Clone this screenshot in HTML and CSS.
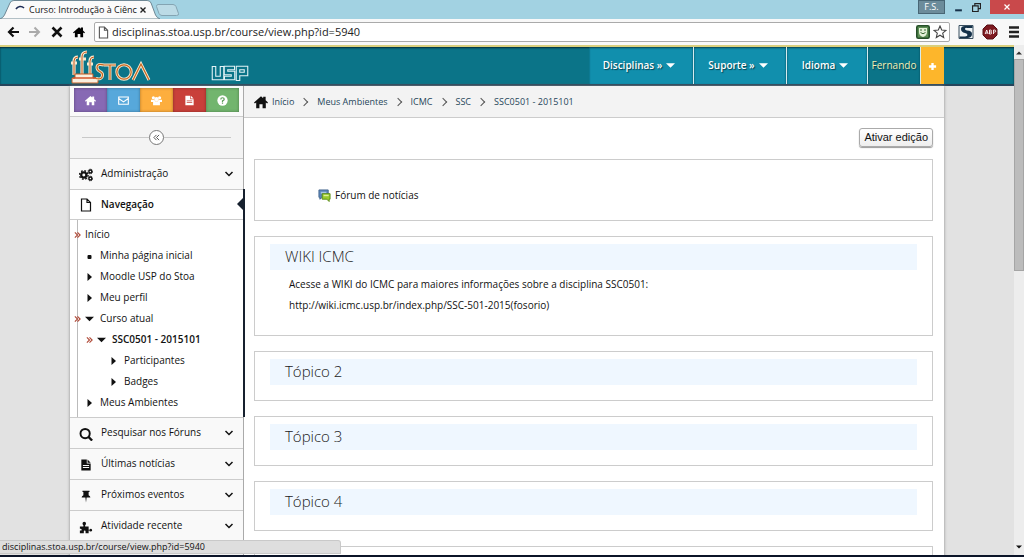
FILE: index.html
```html
<!DOCTYPE html>
<html lang="pt-BR">
<head>
<meta charset="utf-8">
<title>Curso: Introdução à Ciência</title>
<link rel="stylesheet" href="styles.css">
</head>
<body>
<svg class="sprite" aria-hidden="true">
  <symbol id="home" viewBox="0 0 16 16"><path d="M0 8.5 8 1.5l2.5 2.2V2h2.8v4.1L16 8.500l-1 1.200-1.500-1.200V15H9.800v-4.500H6.200V15H2.500V8.500L1 9.700z"/></symbol>
  <symbol id="mail" viewBox="0 0 16 16"><path d="M1 3h14v10.500H1zM1 5l7 5 7-5" fill="none" stroke="currentColor" stroke-width="1.600"/></symbol>
  <symbol id="users" viewBox="0 0 16 16"><circle cx="3.500" cy="4" r="2.300"/><circle cx="12.500" cy="4" r="2.300"/><circle cx="8" cy="6" r="3"/><path d="M0 7h5l1 2h4l1-2h5v3h-3v5H3v-5H0z"/></symbol>
  <symbol id="doc" viewBox="0 0 16 16"><path fill-rule="evenodd" d="M2 1h7v5h5v9H2zM10 1l4 4h-4zM4 8v1.200h8V8zm0 2.500v1.200h8v-1.200z"/></symbol>
  <symbol id="chev" viewBox="0 0 10 10"><path d="m1.500 3 3.500 3.500L8.500 3" fill="none" stroke="currentColor" stroke-width="1.500"/></symbol>
  <symbol id="guil" viewBox="0 0 8 8"><path d="m1 1 3 3-3 3M4 1l3 3-3 3" fill="none" stroke="currentColor" stroke-width="1.300"/></symbol>
  <symbol id="right" viewBox="0 0 6 8"><path d="m1 0 4.500 4L1 8z"/></symbol>
  <symbol id="down" viewBox="0 0 8 6"><path d="M0 1h8L4 5z"/></symbol>
  <symbol id="page" viewBox="0 0 12 14"><path d="M1.500 1h5.500l3.500 3.500V13h-9zM7 1v3.500h3.500" fill="none" stroke="currentColor" stroke-width="1.200"/></symbol>
</svg>
<div class="window">
  <header class="titlebar">
    <div class="tab">
      <svg class="tab-shape" viewBox="0 0 163 19" preserveAspectRatio="none"><path d="M0 19q3-1 4.500-4L10 3q1-2.500 4-2.500h134q3 0 4 2.500l4.500 12q1.500 3 4.500 4z" fill="#fafafa" stroke="#6d8794"/></svg>
      <svg class="spinner" viewBox="0 0 12 12"><path d="M1 5a5 5 0 0 1 8-1" fill="none" stroke="#1d2b55" stroke-width="1.600"/></svg>
      <span class="tab-title">Curso: Introdução à Ciênc</span>
      <button class="plain tab-close" aria-label="Fechar aba"><svg viewBox="0 0 8 8"><path d="m1.500 1.500 5 5m0-5-5 5" stroke="#222" stroke-width="1.400"/></svg></button>
    </div>
    <button class="plain newtab" aria-label="Nova aba"><svg viewBox="0 0 24 12"><path d="M2 .5h15q2 0 3 2l2.500 7q.5 2-2 2H6q-2 0-3-2L.5 2.500Q.5.5 2 .5z" fill="#bcdbe6" stroke="#84a4b2"/></svg></button>
    <div class="win-controls">
      <button class="user">F.S.</button>
      <button class="plain win" aria-label="Minimizar"><svg viewBox="0 0 8 8"><path d="M1 6.500h6" stroke="#17324a" stroke-width="1.800"/></svg></button>
      <button class="plain win" aria-label="Restaurar"><svg viewBox="0 0 8 8"><path d="M2.500 2.500v-2h5v4.500h-2M.5 2.500h5v5h-5z" fill="none" stroke="#222"/></svg></button>
      <button class="close" aria-label="Fechar"><svg viewBox="0 0 8 8"><path d="m1.500 1.500 5 5m0-5-5 5" stroke="#fff" stroke-width="1.200"/></svg></button>
    </div>
  </header>
  <div class="toolbar">
    <button class="plain tool" aria-label="Voltar"><svg viewBox="0 0 14 14"><path d="M13 7H3m4.500-4.500L3 7l4.500 4.500" fill="none" stroke="#111" stroke-width="2.200"/></svg></button>
    <button class="plain tool" aria-label="Avançar"><svg viewBox="0 0 14 14"><path d="M1 7h10M6.500 2.500 11 7l-4.500 4.500" fill="none" stroke="#aaa" stroke-width="2"/></svg></button>
    <button class="plain tool" aria-label="Parar"><svg viewBox="0 0 14 14"><path d="m2.500 2.500 9 9m0-9-9 9" stroke="#111" stroke-width="2.600"/></svg></button>
    <button class="plain tool home" aria-label="Página inicial"><svg viewBox="0 0 16 16"><use href="#home"/></svg></button>
    <label class="address">
      <svg class="pageicon" viewBox="0 0 12 14"><use href="#page"/></svg>
      <input type="text" aria-label="Endereço" value="disciplinas.stoa.usp.br/course/view.php?id=5940">
      <svg class="ext" viewBox="0 0 14 14"><rect x=".8" y=".8" width="12.400" height="12.400" rx="1.500" fill="#5c8f55" stroke="#254f28" stroke-width="1.600"/><path d="M3 3h8v4q0 4-4 5-4-1-4-5z" fill="#e4f1d8"/><path d="M5 4v2m4-2v2M4.500 7.500q2.500 2.500 5 0" stroke="#3c6a37" fill="none"/></svg>
      <svg class="ext" viewBox="0 0 14 14"><path d="m7 1 1.700 4 4.300.4-3.300 2.800 1 4.300L7 10.200l-3.700 2.300 1-4.300L1 5.400 5.300 5z" fill="#fff" stroke="#444" stroke-width="1.100"/></svg>
    </label>
    <button class="plain extbtn" aria-label="Extensão S"><svg viewBox="0 0 16 16"><path d="M1 1.500h14v13H1z" fill="#eef3f5" stroke="#3a5060"/><path d="M14.500 2H7Q3 2 3 5t4 4q2.500.7 2.500 2T7 12.500H1.500v1.500H10q4-.5 4-4T9 6.500Q6.500 6 7 4.700T9 4h5.500z" fill="#15324a"/></svg></button>
    <button class="plain extbtn" aria-label="Adblock Plus"><svg viewBox="0 0 16 16"><path d="M5 1h6l4 4v6l-4 4H5l-4-4V5z" fill="#7e1a20" stroke="#571015"/><path d="m3.200 10 1.500-4 1.500 4M4 9h1.500M7.500 6v4h1q1.200-.2 1.200-1T8.500 8q1-.2 1-1t-1-1zM11.500 10V6h1q1.200.2 1.200 1.200t-1.500 1" fill="none" stroke="#fff" stroke-width=".9"/></svg></button>
    <button class="plain extbtn" aria-label="Menu"><svg viewBox="0 0 16 16"><path d="M3 3.500h10M3 8h10M3 12.500h10" stroke="#222" stroke-width="2.300"/></svg></button>
  </div>
  <div class="viewport">
    <div class="page">
      <div class="site-header">
        <div class="container header-row">
          <a class="logo" href="#" aria-label="Stoa">
            <svg viewBox="2 0 84 36"><g fill="none" stroke="#f7e9cf" stroke-width="3.200"><path d="M6 27V13q0-4 4-4M14 27V9q0-5 5-5M22 27V13q0-4 4-4M3 15h6m2-4h7m1 5h6"/></g><g fill="none" stroke="#c75b22"><path d="M6 27V13q0-4 4-4M14 27V9q0-5 5-5M22 27V13q0-4 4-4"/></g><path d="M7 26h18v4h5v5H4v-5h3z" fill="#f9efdf" stroke="#c55a22"/><path d="M5 30h23" stroke="#d4552a" stroke-width="1.500"/><g fill="none" stroke="#f7e9cf" stroke-width="3"><path d="M36 17q-7-2-7 2.500 0 2.500 3 4t2.500 4q-.5 4.500-6.500 3M36 17h12M42 17v15"/><circle cx="56" cy="24" r="7.200"/><path d="m65 32 8-16 8 16"/></g><g fill="none" stroke="#c8641c" stroke-width="1.200"><path d="M36 17q-7-2-7 2.500 0 2.500 3 4t2.500 4q-.5 4.500-6.500 3M36 17h12M42 17v15"/><circle cx="56" cy="24" r="7.200"/><path d="m65 32 8-16 8 16"/></g></svg>
          </a>
          <a class="usp" href="#" aria-label="USP">
            <svg viewBox="0 0 38 17"><g fill="none" stroke="#e3f3f6" stroke-width="4.600"><path d="M3 1v12h8V1M24 3H15v5h7v5h-9M27 16V3h8v6h-8"/></g><g fill="none" stroke="#0b7488" stroke-width="2.400"><path d="M3 2v11h8V2M23 3h-8v5h7v5h-8M27 15V3h8v6h-8"/></g></svg>
          </a>
          <nav class="menu">
            <a class="m1" href="#">Disciplinas » <svg viewBox="0 0 8 6"><use href="#down"/></svg></a>
            <a class="m2" href="#">Suporte » <svg viewBox="0 0 8 6"><use href="#down"/></svg></a>
            <a class="m3" href="#">Idioma <svg viewBox="0 0 8 6"><use href="#down"/></svg></a>
            <a class="me" href="#">Fernando</a>
            <button class="plus" aria-label="Mais"><svg viewBox="0 0 10 10"><path d="M5 1v8M1 5h8" stroke="#fff" stroke-width="2.600"/></svg></button>
          </nav>
        </div>
      </div>
      <div class="container body">
        <aside class="side">
          <div class="shortcuts">
            <a class="c1" href="#" aria-label="Início"><svg viewBox="0 0 16 16"><use href="#home"/></svg></a>
            <a class="c2" href="#" aria-label="Mensagens"><svg viewBox="0 0 16 16"><use href="#mail"/></svg></a>
            <a class="c3" href="#" aria-label="Participantes"><svg viewBox="0 0 16 16"><use href="#users"/></svg></a>
            <a class="c4" href="#" aria-label="Arquivos"><svg viewBox="0 0 16 16"><use href="#doc"/></svg></a>
            <a class="c5" href="#" aria-label="Ajuda"><svg viewBox="0 0 16 16"><circle cx="8" cy="8" r="7.500"/><path d="M5.500 6.500Q5.500 4 8 4t2.500 2.200Q10.500 7.500 8 8.500V10m0 1v1.800" fill="none" stroke="#5f9f5c" stroke-width="1.800"/></svg></a>
          </div>
          <div class="collapse"><button aria-label="Recolher"><svg viewBox="0 0 8 8"><path d="M4 1 1 4l3 3M7 1 4 4l3 3" fill="none" stroke="#444"/></svg></button></div>
          <a class="row" href="#"><svg class="ico" viewBox="0 0 16 16"><g fill="none" stroke="currentColor"><circle cx="5.500" cy="8" r="3" stroke-width="2.600"/><circle cx="5.500" cy="8" r="4.900" stroke-width="1.600" stroke-dasharray="2 1.850"/><circle cx="13" cy="4" r="1.700" stroke-width="1.600"/><circle cx="13" cy="12" r="1.700" stroke-width="1.600"/><circle cx="13" cy="4" r="2.700" stroke-dasharray="1.200 .9"/><circle cx="13" cy="12" r="2.700" stroke-dasharray="1.200 .9"/></g></svg><span>Administração</span><svg class="chev" viewBox="0 0 10 10"><use href="#chev"/></svg></a>
          <div class="open">
            <a class="row active" href="#"><svg class="ico" viewBox="0 0 14 14"><use href="#page"/></svg><span>Navegação</span></a>
            <ul class="tree">
              <li class="l0"><svg class="guil" viewBox="0 0 8 8"><use href="#guil"/></svg><a href="#">Início</a></li>
              <li class="l1"><i class="gap"></i><i class="mark"><svg viewBox="0 0 8 8"><rect x="2" y="3" width="4" height="4" rx="1"/></svg></i><a href="#">Minha página inicial</a></li>
              <li class="l1"><i class="gap"></i><i class="mark"><svg viewBox="0 0 6 8"><use href="#right"/></svg></i><a href="#">Moodle USP do Stoa</a></li>
              <li class="l1"><i class="gap"></i><i class="mark"><svg viewBox="0 0 6 8"><use href="#right"/></svg></i><a href="#">Meu perfil</a></li>
              <li class="l1"><svg class="guil" viewBox="0 0 8 8"><use href="#guil"/></svg><i class="mark"><svg viewBox="0 0 8 6"><use href="#down"/></svg></i><a href="#">Curso atual</a></li>
              <li class="l2"><svg class="guil" viewBox="0 0 8 8"><use href="#guil"/></svg><i class="mark"><svg viewBox="0 0 8 6"><use href="#down"/></svg></i><a class="bold" href="#">SSC0501 - 2015101</a></li>
              <li class="l3"><i class="gap"></i><i class="mark"><svg viewBox="0 0 6 8"><use href="#right"/></svg></i><a href="#">Participantes</a></li>
              <li class="l3"><i class="gap"></i><i class="mark"><svg viewBox="0 0 6 8"><use href="#right"/></svg></i><a href="#">Badges</a></li>
              <li class="l1"><i class="gap"></i><i class="mark"><svg viewBox="0 0 6 8"><use href="#right"/></svg></i><a href="#">Meus Ambientes</a></li>
            </ul>
          </div>
          <a class="row" href="#"><svg class="ico" viewBox="0 0 16 16"><circle cx="7" cy="7.500" r="5.300" fill="none" stroke="currentColor" stroke-width="2.200"/><path d="m10.500 11 4.500 4.500" stroke="currentColor" stroke-width="2.600"/></svg><span>Pesquisar nos Fóruns</span><svg class="chev" viewBox="0 0 10 10"><use href="#chev"/></svg></a>
          <a class="row" href="#"><svg class="ico" viewBox="-1 -1 18 18"><use href="#doc" width="16" height="16"/></svg><span>Últimas notícias</span><svg class="chev" viewBox="0 0 10 10"><use href="#chev"/></svg></a>
          <a class="row" href="#"><svg class="ico" viewBox="0 0 16 16"><path d="M4 2h8v1.500h-1V7q2 .8 2 2.800H8.700L8 15.500l-.7-5.700H3Q3 7.800 5 7V3.500H4z"/></svg><span>Próximos eventos</span><svg class="chev" viewBox="0 0 10 10"><use href="#chev"/></svg></a>
          <a class="row" href="#"><svg class="ico" viewBox="0 0 16 16"><path d="M1 7.500h4V6q-1-1-1-2 0-2 2-2t2 2q0 1-1 2v1.500h4v3.500h1q.5-1 1.500-1t1.500 1.500-1.500 1.500-1.500-1H11V15H7.500v-2q0-1-1-1t-1 1v2H1v-3h1q1 0 1-1t-1-1H1z"/></svg><span>Atividade recente</span><svg class="chev" viewBox="0 0 10 10"><use href="#chev"/></svg></a>
        </aside>
        <main class="main">
          <nav class="crumbs">
            <a class="crumb-home" href="#"><svg viewBox="0 0 16 16"><use href="#home"/></svg>Início</a>
            <a href="#">Meus Ambientes</a>
            <a href="#">ICMC</a>
            <a href="#">SSC</a>
            <a href="#">SSC0501 - 2015101</a>
          </nav>
          <div class="content">
            <div class="edit-row"><button class="edit">Ativar edição</button></div>
            <section class="card forum"><a href="#"><svg viewBox="0 0 14 14"><path d="M1 1h10v8H4.500L2 11V9H1z" fill="#5b86bb" stroke="#46688f"/><path d="M3 3h6v2H3z" fill="#a9c6e4"/><path d="M4.500 5H13v6h-1v2.500L9.500 11h-5z" fill="#9aca2c" stroke="#5b8a19"/><path d="M6 7h5.500" stroke="#dff09d" stroke-width="1.500"/></svg>Fórum de notícias</a></section>
            <section class="card"><h3>WIKI ICMC</h3><div class="text"><p>Acesse a WIKI do ICMC para maiores informações sobre a disciplina SSC0501:</p><p>http://wiki.icmc.usp.br/index.php/SSC-501-2015(fosorio)</p></div></section>
            <section class="card"><h3>Tópico 2</h3></section>
            <section class="card"><h3>Tópico 3</h3></section>
            <section class="card"><h3>Tópico 4</h3></section>
            <section class="card"></section>
          </div>
        </main>
      </div>
    </div>
    <div class="scrollbar">
      <svg viewBox="0 0 10 10"><path d="m2 6.500 3-3 3 3z" fill="#333"/></svg>
      <div class="thumb"></div>
      <svg viewBox="0 0 10 10"><path d="m2 3.500 3 3 3-3z" fill="#111"/></svg>
    </div>
    <div class="status">disciplinas.stoa.usp.br/course/view.php?id=5940</div>
  </div>
  <div class="taskbar"></div>
</div>
</body>
</html>
```
FILE: styles.css
```css
* { box-sizing: border-box; }
body { margin: 0; font: 10px/21px "Open Sans", "Noto Sans", sans-serif; color: #111; }
a { color: inherit; text-decoration: none; }
button { font: inherit; cursor: pointer; }
svg { display: block; fill: currentColor; flex: none; }
.sprite { position: absolute; width: 0; height: 0; }
.plain { border: 0; padding: 0; background: none; }
.window { height: 100vh; display: flex; flex-direction: column; background: #fff; overflow: hidden; }

/* Browser frame */
.titlebar { flex: none; height: 19px; display: flex; background: #a2d2e2; }
.tab { position: relative; width: 162px; display: flex; align-items: center; padding: 0 15px; }
.tab-shape { position: absolute; inset: 0; width: 100%; height: 100%; }
.spinner { position: relative; width: 12px; height: 12px; margin-right: 2px; }
.tab-title { position: relative; flex: 1; white-space: nowrap; font-size: 9px; line-height: 18px; }
.tab-close { position: relative; }
.tab-close svg { width: 8px; height: 8px; }
.newtab svg { width: 24px; height: 12px; margin-left: -6px; }
.win-controls { margin-left: auto; display: flex; align-items: flex-start; gap: 9px; }
.user { width: 27px; height: 14px; border: 1px solid #486675; padding: 0; background: #6c8c9b; color: #fff; font-size: 9px; line-height: 12px; }
.win svg { width: 9px; height: 9px; margin: 3px 0 0; }
.close { width: 34px; height: 14px; border: 0; padding: 0; background: #c9494b; display: grid; place-items: center; }
.close svg { width: 8px; height: 8px; }
.toolbar { flex: none; height: 26px; display: flex; align-items: center; gap: 8px; padding: 0 2px 0 6px; background: #f8f8f8; }
.tool svg { width: 14px; height: 14px; }
.home svg { width: 12px; margin: 0 1px; }
.address { flex: 1; height: 20px; display: flex; align-items: center; gap: 3px; padding: 0 2px 0 3px; border: 1px solid #aaa; border-radius: 2px; background: #fff; }
.address input { flex: 1; min-width: 0; border: 0; padding: 0; outline: 0; background: none; font: 11px/16px "Open Sans", sans-serif; color: #222; }
.pageicon { width: 11px; height: 13px; color: #555; }
.ext { width: 14px; height: 14px; }
.extbtn svg { width: 16px; height: 16px; }
.viewport { position: relative; flex: 1; min-height: 0; display: flex; }
.page { flex: 1; min-width: 0; overflow: hidden; background: #e2e2e2; }
.scrollbar { width: 10px; background: #ededed; display: flex; flex-direction: column; padding: 2px 0; }
.scrollbar svg { width: 10px; height: 12px; }
.scrollbar svg:last-child { margin-top: auto; }
.thumb { height: 212px; background: #bcbcbc; border: 1px solid #a5a5a5; }
.status { position: absolute; left: 0; bottom: 1px; width: 341px; height: 14px; padding-left: 2px; background: #dedede; border: 1px solid #c9c9c9; border-left: 0; border-top-right-radius: 3px; font-size: 9px; line-height: 12px; }
.taskbar { flex: none; height: 2px; background: #0b1428; }

/* Site header */
.container { max-width: 874px; margin: 0 auto; }
.site-header { height: 41px; background: #0b7488; border-top: 2px solid #d9cf7c; border-bottom: 2px solid #26445a; box-shadow: inset 0 1px 2px #022b38; }
.header-row { height: 100%; display: flex; }
.logo svg { width: 84px; height: 36px; margin-top: 1px; }
.usp { margin: 18px 0 0 57px; }
.usp svg { width: 38px; height: 17px; }
.menu { margin-left: auto; display: flex; }
.menu a { display: flex; align-items: center; justify-content: center; gap: 4px; border-right: 1px solid #d5ebef; background: #118fad; color: #fff; font-weight: 600; text-shadow: 1px 1px 1px #07414f; box-shadow: inset 0 1px 2px #07414f; }
.menu a svg { width: 9px; height: 7px; }
.menu .m1 { width: 105px; padding-right: 4px; }
.menu .m2 { width: 93px; padding-right: 4px; }
.menu .m3 { width: 81px; padding-right: 4px; }
.menu .me { width: 53px; background: #0b7488; color: #f3f0b5; font-weight: 400; }
.plus { width: 23px; border: 0; padding: 2px 0 0; background: #fdb62b; display: grid; place-items: center; }
.plus svg { width: 9px; height: 9px; }

/* Page columns */
.body { display: flex; align-items: stretch; background: #fff; box-shadow: 0 0 3px #888; }
.side { width: 174px; flex: none; background: #f3f3f3; border-right: 1px solid #aaa; }
.shortcuts { height: 31px; display: flex; padding: 2px 4px 4px; background: #fafafa; border-bottom: 1px solid #ccc; }
.shortcuts a { flex: 1; display: grid; place-items: center; color: #fff; box-shadow: inset 0 0 3px rgba(0, 0, 0, .35); }
.shortcuts svg { width: 11px; height: 11px; }
.c1 { background: #8769b4; }
.c2 { background: #57a8db; }
.c3 { background: #fdae3e; }
.c4 { background: #c9403a; }
.c5 { background: #72b56e; }
.collapse { height: 41px; display: flex; align-items: center; padding: 0 12px; }
.collapse::before, .collapse::after { content: ""; flex: 1; height: 1px; background: #c8c8c8; }
.collapse button { width: 15px; height: 15px; border: 1px solid #777; border-radius: 50%; background: #fff; padding: 0; display: grid; place-items: center; }
.collapse svg { width: 7px; height: 7px; }
.row { height: 31px; display: flex; align-items: center; padding: 0 9px 1px; border-top: 1px solid #ccc; background: #f9f9f9; }
.row span { flex: 1; }
.ico { width: 14px; height: 14px; margin: 2px 8px 0 0; }
.chev { width: 10px; height: 10px; }
.open { position: relative; margin-right: -2px; border-right: 2px solid #16202e; background: #fff; }
.open::after { content: ""; position: absolute; right: 0; top: 9px; border: 6px solid transparent; border-left-width: 0; border-right-color: #16202e; }
.active { height: 30px; background: #fff; font-weight: 600; }
.tree { list-style: none; margin: 0; padding: 4px 0; border-top: 1px solid #ccc; background: linear-gradient(#bbb, #bbb) 7px 0 / 1px 100% no-repeat; }
.tree li { display: flex; align-items: center; padding-left: 4px; }
.tree .l2 { padding-left: 16px; }
.tree .l3 { padding-left: 28px; }
.guil, .gap { width: 7px; height: 8px; margin-right: 4px; color: #b04a38; flex: none; }
.mark { width: 15px; flex: none; }
.mark svg { width: 9px; height: 8px; }
.bold { font-weight: 600; }
.main { flex: 1; min-width: 0; }
.crumbs { height: 32px; display: flex; align-items: center; padding-left: 10px; background: #f3f3f3; border-bottom: 1px solid #ccc; color: #26465a; font-size: 9px; }
.crumbs a { display: flex; align-items: center; }
.crumbs a + a::before { content: ""; width: 5px; height: 5px; margin: 0 10px 0 7px; border: solid #555; border-width: 1px 1px 0 0; rotate: 45deg; }
.crumb-home svg { width: 14px; height: 14px; margin-right: 4px; color: #111; }
.content { padding: 10px 11px 0 10px; display: flex; flex-direction: column; gap: 15px; }
.edit-row { height: 16px; display: flex; justify-content: flex-end; align-items: flex-start; }
.edit { height: 19px; padding: 0 4px 1px; border: 1px solid #aaa; border-radius: 3px; background: linear-gradient(#fff, #eee); box-shadow: 0 1px 1px #999; font: 11px/16px "Liberation Sans", Arial, sans-serif; color: #111; }
.card { min-height: 50px; padding: 7px 15px; border: 1px solid #ccc; }
.card h3 { margin: 0; padding-left: 15px; height: 26px; background: #eff7ff; color: #222; font-size: 15px; line-height: 25px; font-weight: 300; }
.text { padding: 4px 19px 12px; }
.text p { margin: 0; }
.forum { min-height: 62px; padding: 25px 63px 0; }
.forum a { display: flex; align-items: center; gap: 4px; }
.forum svg { width: 13px; height: 13px; }
```
